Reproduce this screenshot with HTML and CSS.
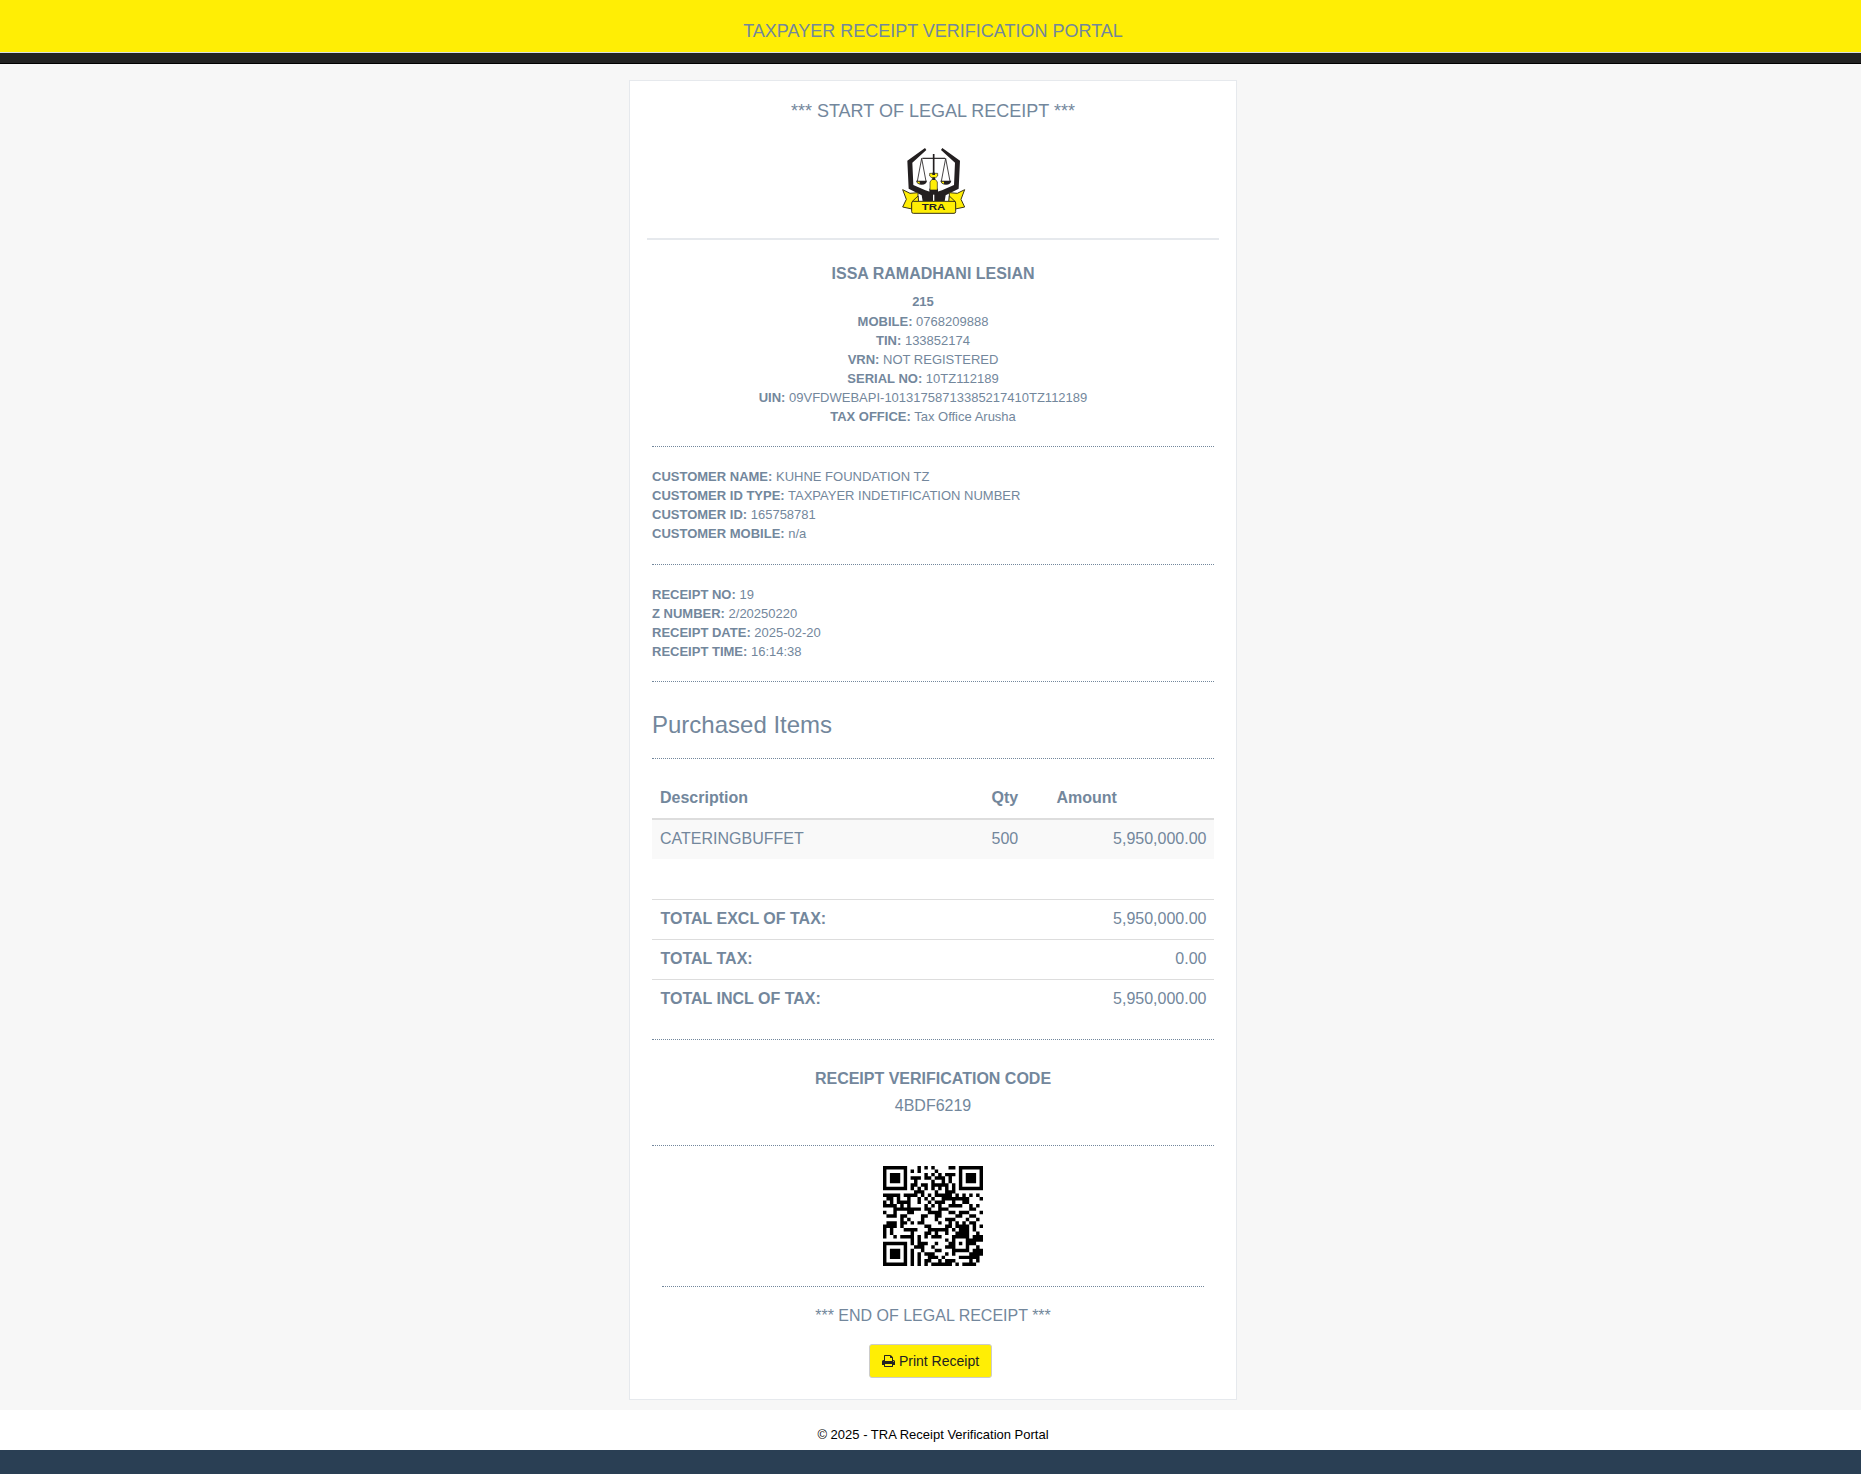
FILE: index.html
```
<!DOCTYPE html>
<html lang="en">
<head>
<meta charset="utf-8">
<title>TRA Receipt Verification Portal</title>
<link rel="stylesheet" href="styles.css">
</head>
<body>
<header class="topbar">TAXPAYER RECEIPT VERIFICATION PORTAL</header>
<div class="strip"></div>
<main class="page">
  <article class="receipt">
    <h4 class="start">*** START OF LEGAL RECEIPT ***</h4>
    <svg class="logo" viewBox="36 24 192 204" role="img" aria-label="TRA">
      <!-- hands -->
      <g fill="#231f20">
        <path d="M105 24 L52 62 L56 146 L95 166 L98 184 H129 V158 L106 151 L70 135 L67 68 L109 30 Z"/>
        <path d="M157 24 L210 62 L206 146 L167 166 L164 184 H133 V158 L156 151 L192 135 L195 68 L153 30 Z"/>
        <path d="M118 146h26v18h-26z"/>
      </g>
      <!-- scales -->
      <g fill="none" stroke="#231f20">
        <path d="M131 42V108" stroke-width="5"/>
        <path d="M97 55H165" stroke-width="3.500"/>
        <path d="M95 55L82 124M95 55L108 124M167 55L154 124M167 55L180 124" stroke-width="2.500"/>
      </g>
      <path d="M78 122H111Q109 134 95 134T78 122Z" fill="#231f20"/>
      <path d="M151 122H184Q182 134 168 134T151 122Z" fill="#231f20"/>
      <path d="M81 125h8v6q-6-1-8-6zM154 125h8v6q-6-1-8-6z" fill="#ffee05"/>
      <!-- torch -->
      <g fill="#ffee05" stroke="#231f20" stroke-width="2">
        <path d="M119 100h24v8l-7 6h-10l-7-6z"/>
        <path d="M120 150V126l6-8h10l6 8v24z"/>
      </g>
      <path d="M127 98h8v7h-8zM127 112h8v8h-8z" fill="#231f20"/>
      <!-- ribbon -->
      <g fill="#ffee05" stroke="#3a3516" stroke-width="3" stroke-linejoin="round">
        <path d="M38 149 L60 160 L84 158 L84 184 L66 190 L66 207 L38 201 L49 178 Z"/>
        <path d="M224 149 L202 160 L178 158 L178 184 L196 190 L196 207 L224 201 L213 178 Z"/>
        <path d="M84 168 L66 185 H86 Z M178 168 L196 185 H176 Z"/>
        <rect x="65" y="184" width="132" height="36" rx="5"/>
      </g>
      <text x="95" y="211" textLength="71" lengthAdjust="spacingAndGlyphs" class="logo-text">TRA</text>
    </svg>
    <hr class="rule">
    <section class="issuer">
      <h4 class="name">ISSA RAMADHANI LESIAN</h4>
      <div class="issuer-lines">
        <p class="house"><b>215</b></p>
        <p><b>MOBILE:</b> 0768209888</p>
        <p><b>TIN:</b> 133852174</p>
        <p><b>VRN:</b> NOT REGISTERED</p>
        <p><b>SERIAL NO:</b> 10TZ112189</p>
        <p><b>UIN:</b> 09VFDWEBAPI-10131758713385217410TZ112189</p>
        <p><b>TAX OFFICE:</b> Tax Office Arusha</p>
      </div>
    </section>
    <section class="details customer">
      <p><b>CUSTOMER NAME:</b> KUHNE FOUNDATION TZ</p>
      <p><b>CUSTOMER ID TYPE:</b> TAXPAYER INDETIFICATION NUMBER</p>
      <p><b>CUSTOMER ID:</b> 165758781</p>
      <p><b>CUSTOMER MOBILE:</b> n/a</p>
    </section>
    <section class="details numbers">
      <p><b>RECEIPT NO:</b> 19</p>
      <p><b>Z NUMBER:</b> 2/20250220</p>
      <p><b>RECEIPT DATE:</b> 2025-02-20</p>
      <p><b>RECEIPT TIME:</b> 16:14:38</p>
    </section>
    <h3 class="items-title">Purchased Items</h3>
    <section class="tables">
      <table class="items">
        <thead><tr><th class="c-desc">Description</th><th class="c-qty">Qty</th><th>Amount</th></tr></thead>
        <tbody><tr><td>CATERINGBUFFET</td><td>500</td><td class="num">5,950,000.00</td></tr></tbody>
      </table>
      <table class="totals">
        <tr><th>TOTAL EXCL OF TAX:</th><td class="num">5,950,000.00</td></tr>
        <tr><th>TOTAL TAX:</th><td class="num">0.00</td></tr>
        <tr><th>TOTAL INCL OF TAX:</th><td class="num">5,950,000.00</td></tr>
      </table>
    </section>
    <section class="code">
      <h4>RECEIPT VERIFICATION CODE</h4>
      <p>4BDF6219</p>
    </section>
    <section class="qr-box"><svg class="qr" viewBox="0 0 29 29" role="img" aria-label="QR code"><path id="qr" fill="#000"/></svg></section>
    <section class="closing">
      <p class="end">*** END OF LEGAL RECEIPT ***</p>
      <button class="print" type="button"><svg class="print-icon" viewBox="0 0 1664 1792"><path fill="currentColor" d="M384 1536h896v-256H384v256zm0-640h896V512h-160q-40 0-68-28t-28-68V256H384v640zm1152 64q0-26-19-45t-45-19-45 19-19 45 19 45 45 19 45-19 19-45zm128 0v416q0 13-9.500 22.500t-22.500 9.500h-224v160q0 40-28 68t-68 28H352q-40 0-68-28t-28-68v-160H32q-13 0-22.500-9.500T0 1376V960q0-79 56.500-135.500T192 768h64V224q0-40 28-68t68-28h672q40 0 88 20t76 48l152 152q28 28 48 76t20 88v256h64q79 0 135.500 56.500T1664 960z"/></svg> Print Receipt</button>
    </section>
  </article>
</main>
<footer class="footer">© 2025 - TRA Receipt Verification Portal</footer>
<script src="qr.js"></script>
</body>
</html>
```
FILE: styles.css
```
* { box-sizing: border-box; }
html { background: #2a3f54; }
body { margin: 0; background: #2a3f54; color: #73879c; font: 16px/23px "Liberation Sans", Arial, sans-serif; }
h3, h4, p { margin: 0; font-weight: 400; }
.topbar { height: 53px; padding: 21px 0 0 5px; background: #ffee05; border-bottom: 1px solid #d9dee4; font-size: 18px; line-height: 20px; text-align: center; }
.strip { height: 11px; background: #222; border-bottom: 1px solid #000; }
.page { height: 1346px; padding: 16px 0 0 5px; background: #f7f7f7; }
.receipt { width: 608px; height: 1320px; margin: 0 auto; padding: 0 22px; background: #fff; border: 1px solid #e6e9ed; }
.start { padding-top: 20px; font-size: 18px; line-height: 20px; text-align: center; }
.logo { display: block; width: 64px; height: 68px; margin: 27px 0 0 250px; }
.logo-text { font: bold 26px "Liberation Sans", Arial, sans-serif; fill: #231f20; }
.rule { width: 572px; height: 2px; margin: 22px 0 0 -5px; border: 0; background: #e6e9ed; }
.issuer { height: 206px; padding-top: 25px; text-align: center; }
.name { font-weight: 700; line-height: 18px; }
.issuer-lines { margin: 9px 20px 0 0; font-size: 13px; line-height: 19px; }
.house { line-height: 20px; }
.details { border-top: 1px dotted #73879c; padding-top: 20px; font-size: 13px; line-height: 19px; }
.customer { height: 118px; }
.numbers { height: 117px; }
.items-title { height: 77px; padding-top: 30px; border-top: 1px dotted #73879c; font-size: 24px; line-height: 26px; }
.tables { height: 281px; padding-top: 19px; border-top: 1px dotted #73879c; }
table { width: 100%; border-collapse: separate; border-spacing: 0; table-layout: fixed; }
th, td { padding: 7px 8px 9px; text-align: left; line-height: 23px; }
.items th { height: 42px; padding-top: 8px; border-bottom: 2px solid #ddd; }
.items td { height: 39px; background: #f9f9f9; }
.c-desc { width: 331.5px; }
.c-qty { width: 65px; }
.totals { margin-top: 40px; }
.totals th, .totals td { height: 40px; border-top: 1px solid #ddd; }
.totals th { padding-left: 8.5px; }
.items .num, .totals .num { padding-right: 7.5px; text-align: right; }
.code { height: 106px; padding-top: 27px; border-top: 1px dotted #73879c; text-align: center; }
.code h4 { font-weight: 700; }
.code p { padding-top: 4px; }
.qr-box { height: 141px; padding-top: 20px; border-top: 1px dotted #73879c; text-align: center; }
.qr { display: block; width: 100px; height: 100px; margin: 0 auto; }
.closing { margin: 0 10px; padding-top: 17px; border-top: 1px dotted #73879c; text-align: center; }
.print { display: inline-flex; align-items: center; gap: 4px; height: 34px; margin: 17px 5px 0 0; padding: 0 12px; border: 1px solid #ccc; border-radius: 3px; background: #ffee05; color: #222; font: 14px/20px "Liberation Sans", Arial, sans-serif; }
.print-icon { width: 13px; height: 14px; }
.footer { height: 40px; padding: 16px 0 0 5px; background: #fff; color: #000; font-size: 13px; line-height: 18px; text-align: center; }
```
FILE: qr.js
```
// Draws the verification link as a version 3 QR code (level L, mask 2).
(function () {
  var text = "https://verify.tra.go.tz/4BDF6219_161438";
  var N = 29, ECC = 15, DATA = 55, FORMAT = 0x7DAA;
  var i, j, r, c;

  // data codewords
  var bits = [];
  function put(v, n) { for (var k = n - 1; k >= 0; k--) bits.push((v >> k) & 1); }
  put(4, 4);
  put(text.length, 8);
  for (i = 0; i < text.length; i++) put(text.charCodeAt(i), 8);
  put(0, 4);
  for (i = 0; bits.length < DATA * 8; i++) put(i % 2 ? 17 : 236, 8);
  var data = [];
  for (i = 0; i < bits.length; i += 8) data.push(parseInt(bits.slice(i, i + 8).join(""), 2));

  // Reed-Solomon remainder
  function mul(a, b) {
    var z = 0;
    for (var k = 7; k >= 0; k--) { z = (z << 1) ^ ((z >> 7) * 285); z ^= ((b >> k) & 1) * a; }
    return z;
  }
  var gen = [], root = 1;
  for (i = 0; i < ECC - 1; i++) gen.push(0);
  gen.push(1);
  for (i = 0; i < ECC; i++) {
    for (j = 0; j < ECC; j++) { gen[j] = mul(gen[j], root); if (j + 1 < ECC) gen[j] ^= gen[j + 1]; }
    root = mul(root, 2);
  }
  var rem = gen.map(function () { return 0; });
  data.forEach(function (b) {
    var f = b ^ rem.shift();
    rem.push(0);
    gen.forEach(function (g, k) { rem[k] ^= mul(g, f); });
  });
  var all = data.concat(rem);

  // function patterns
  var m = [], fixed = [];
  for (r = 0; r < N; r++) { m.push([]); fixed.push([]); for (c = 0; c < N; c++) { m[r].push(0); fixed[r].push(0); } }
  function set(r, c, v) { if (r >= 0 && c >= 0 && r < N && c < N) { m[r][c] = v ? 1 : 0; fixed[r][c] = 1; } }
  for (i = 0; i < N; i++) { set(6, i, i % 2 === 0); set(i, 6, i % 2 === 0); }
  [[3, 3], [3, N - 4], [N - 4, 3]].forEach(function (p) {
    for (var a = -4; a <= 4; a++) for (var b = -4; b <= 4; b++) {
      var d = Math.max(Math.abs(a), Math.abs(b));
      set(p[0] + a, p[1] + b, d !== 2 && d !== 4);
    }
  });
  for (i = -2; i <= 2; i++) for (j = -2; j <= 2; j++) set(22 + i, 22 + j, Math.max(Math.abs(i), Math.abs(j)) !== 1);
  function fb(k) { return (FORMAT >> k) & 1; }
  for (i = 0; i <= 5; i++) set(i, 8, fb(i));
  set(7, 8, fb(6)); set(8, 8, fb(7)); set(8, 7, fb(8));
  for (i = 9; i < 15; i++) set(8, 14 - i, fb(i));
  for (i = 0; i < 8; i++) set(8, N - 1 - i, fb(i));
  for (i = 8; i < 15; i++) set(N - 15 + i, 8, fb(i));
  set(N - 8, 8, 1);

  // zigzag placement
  var n = 0;
  for (var right = N - 1; right >= 1; right -= 2) {
    if (right === 6) right = 5;
    for (var v = 0; v < N; v++) for (j = 0; j < 2; j++) {
      c = right - j;
      r = ((right + 1) & 2) === 0 ? N - 1 - v : v;
      if (!fixed[r][c]) { if (n < all.length * 8) m[r][c] = (all[n >> 3] >> (7 - (n & 7))) & 1; n++; }
    }
  }

  var path = "";
  for (r = 0; r < N; r++) for (c = 0; c < N; c++) {
    if (!fixed[r][c] && c % 3 === 0) m[r][c] ^= 1;
    if (m[r][c]) path += "M" + c + " " + r + "h1v1h-1z";
  }
  document.getElementById("qr").setAttribute("d", path);
})();
```
